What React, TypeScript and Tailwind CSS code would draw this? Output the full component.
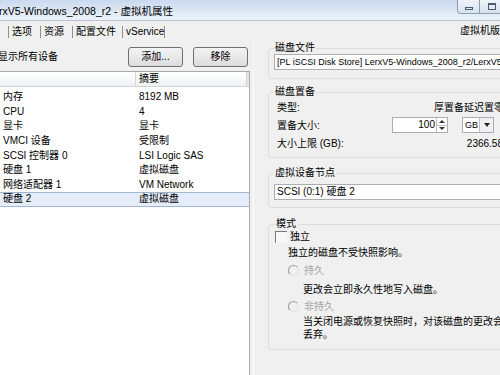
import React from 'react';

const devices = [
  { name: '内存', summary: '8192 MB' },
  { name: 'CPU', summary: '4' },
  { name: '显卡', summary: '显卡' },
  { name: 'VMCI 设备', summary: '受限制' },
  { name: 'SCSI 控制器 0', summary: 'LSI Logic SAS' },
  { name: '硬盘 1', summary: '虚拟磁盘' },
  { name: '网络适配器 1', summary: 'VM Network' },
  { name: '硬盘 2', summary: '虚拟磁盘', selected: true },
];

const tabs = [
  { label: '选项', w: 'w-[32px]' },
  { label: '资源', w: 'w-[32px]' },
  { label: '配置文件', w: 'w-[50px]' },
  { label: 'vService', w: 'w-[43px]' },
];

const Radio = () => (
  <span className="w-[11px] h-[11px] rounded-full border border-t-[#9a9a9a] border-l-[#9a9a9a] border-r-[#e2e2e2] border-b-[#e2e2e2] shrink-0" />
);

const App: React.FC = () => {
  return (
    <div className="w-[500px] h-[375px] overflow-hidden bg-[#f0f0f0] text-[10px] text-black font-['Liberation_Sans','Noto_Sans_CJK_SC',sans-serif] flex flex-col">
      {/* title bar */}
      <div className="h-[21px] shrink-0 flex items-start justify-between border-b border-[#b4c2d3] bg-gradient-to-b from-[#c9d9ee] to-[#edf3fa]">
        <div className="ml-[-1px] mt-[5px] leading-[12px] text-[10.5px] whitespace-nowrap">rxV5-Windows_2008_r2 - 虚拟机属性</div>
        <div className="flex mr-[-5px]">
          <div className="w-[23px] h-[14px] border border-[#8a9bb2] border-t-0 rounded-bl-[4px] bg-gradient-to-b from-[#eef3f9] to-[#d6e1ee] flex items-center justify-center">
            <span className="w-[8px] h-[3px] border border-[#4a5a70] mt-[3px]" />
          </div>
          <div className="w-[25px] h-[14px] border border-l-0 border-[#8a9bb2] border-t-0 bg-gradient-to-b from-[#eef3f9] to-[#d6e1ee] flex items-center justify-center">
            <span className="w-[8px] h-[7px] border border-[#4a5a70] border-t-2" />
          </div>
        </div>
      </div>

      {/* tab strip */}
      <div className="h-[19px] shrink-0 flex items-end justify-between pb-[2px]">
        <div className="flex pl-[8px]">
          {tabs.map((t, i) => (
            <div
              key={t.label}
              className={`${t.w} h-[12px] leading-[12px] pl-[3px] border-l border-[#8c8f94] whitespace-nowrap ${i === tabs.length - 1 ? 'border-r' : ''}`}
            >
              {t.label}
            </div>
          ))}
        </div>
        <div className="mr-[-40px] w-[80px] mb-[1px] leading-[12px] whitespace-nowrap">虚拟机版本: 8</div>
      </div>

      <div className="flex-1 flex min-h-0">
        {/* left pane */}
        <div className="w-[250px] shrink-0 flex flex-col">
          <div className="h-[31px] shrink-0 flex items-center justify-between pt-[2px] pr-[2px]">
            <span className="ml-[-2px] leading-[12px] whitespace-nowrap">显示所有设备</span>
            <div className="flex gap-[10px]">
              <button className="w-[55px] h-[20px] border border-[#707070] rounded-[3px] bg-gradient-to-b from-[#f4f4f4] to-[#dcdcdc] leading-[12px]">添加...</button>
              <button className="w-[55px] h-[20px] border border-[#707070] rounded-[3px] bg-gradient-to-b from-[#f4f4f4] to-[#dcdcdc] leading-[12px]">移除</button>
            </div>
          </div>
          <div className="flex-1 bg-white border-t border-r border-[#a9a9a9] flex flex-col">
            <div className="h-[15px] shrink-0 flex border-b border-[#d5d5d5] bg-gradient-to-b from-white to-[#eef0f3]">
              <div className="w-[136px] border-r border-[#d5d5d5]" />
              <div className="w-[111px] pl-[3px] leading-[14px] border-r border-[#d5d5d5]">摘要</div>
              <div className="flex-1 bg-[#e4e4e4]" />
            </div>
            <div className="pt-[3px] flex flex-col">
              {devices.map((d) => (
                <div
                  key={d.name}
                  className={`h-[14.6px] flex items-center whitespace-nowrap ${d.selected ? 'bg-[#e4edf9] border-y border-[#9fb5d2]' : ''}`}
                >
                  <span className="w-[139px] pl-[3px] leading-[12px]">{d.name}</span>
                  <span className="leading-[12px]">{d.summary}</span>
                </div>
              ))}
            </div>
          </div>
        </div>

        {/* right pane */}
        <div className="ml-[3px] w-[290px] shrink-0 border-l border-[#fafafa] pl-[14px] pt-[2px] flex flex-col">
          <fieldset className="w-[262px] border border-[#d5dfe5] rounded-[3px] px-[5px] pb-[8px]">
            <legend className="px-[1px] leading-[12px]">磁盘文件</legend>
            <div className="h-[16px] border border-[#abadb3] bg-white pl-[2px] leading-[14px] whitespace-nowrap overflow-hidden text-[9px]">
              [PL iSCSI Disk Store] LerxV5-Windows_2008_r2/LerxV5-Windows_2008_r2_1.vmdk
            </div>
          </fieldset>

          <fieldset className="mt-[7px] w-[262px] border border-[#d5dfe5] rounded-[3px] px-[5px] pb-[7px]">
            <legend className="px-[1px] leading-[12px]">磁盘置备</legend>
            <div className="w-[229px] flex flex-col">
              <div className="mt-[2px] h-[14px] flex items-center justify-between whitespace-nowrap">
                <span className="pl-[3px]">类型:</span>
                <span className="mr-[-1px]">厚置备延迟置零</span>
              </div>
              <div className="mt-[3px] h-[16px] flex items-center whitespace-nowrap">
                <span className="w-[118px] pl-[3px]">置备大小:</span>
                <div className="w-[56px] h-[16px] border border-[#abadb3] bg-white flex">
                  <span className="flex-1 text-right pr-[1px] leading-[14px]">100</span>
                  <div className="w-[11px] border-l border-[#c0c0c0] flex flex-col">
                    <div className="flex-1 flex items-center justify-center border-b border-[#c0c0c0]">
                      <span className="w-0 h-0 border-x-[3px] border-x-transparent border-b-[3px] border-b-[#333]" />
                    </div>
                    <div className="flex-1 flex items-center justify-center">
                      <span className="w-0 h-0 border-x-[3px] border-x-transparent border-t-[3px] border-t-[#333]" />
                    </div>
                  </div>
                </div>
                <div className="ml-[14px] w-[32px] h-[16px] border border-[#abadb3] bg-white flex">
                  <span className="flex-1 pl-[2px] leading-[14px] text-[9px]">GB</span>
                  <div className="w-[14px] border-l border-[#c0c0c0] bg-[#f0f0f0] flex items-center justify-center">
                    <span className="w-0 h-0 border-x-[3px] border-x-transparent border-t-[4px] border-t-[#222]" />
                  </div>
                </div>
              </div>
              <div className="mt-[3px] h-[14px] flex items-center justify-between whitespace-nowrap">
                <span className="pl-[3px]">大小上限 (GB):</span>
                <span>2366.58</span>
              </div>
            </div>
          </fieldset>

          <fieldset className="mt-[9px] w-[262px] border border-[#d5dfe5] rounded-[3px] px-[5px] pb-[7px]">
            <legend className="px-[1px] leading-[12px]">虚拟设备节点</legend>
            <div className="mt-[5px] h-[16px] border border-[#abadb3] bg-white pl-[2px] leading-[14px] whitespace-nowrap">
              SCSI (0:1) 硬盘 2
            </div>
          </fieldset>

          <fieldset className="mt-[10px] w-[262px] border border-[#d5dfe5] rounded-[3px] px-[5px] pb-[8px]">
            <legend className="px-[2px] leading-[12px]">模式</legend>
            <div className="h-[13px] flex items-center whitespace-nowrap">
              <span className="ml-[1px] w-[12px] h-[12px] border-t border-l border-t-[#7a7a7a] border-l-[#7a7a7a] bg-[#f7f7f7]" />
              <span className="ml-[3px]">独立</span>
            </div>
            <div className="mt-[2px] h-[14px] pl-[14px] flex items-center whitespace-nowrap">独立的磁盘不受快照影响。</div>
            <div className="mt-[4px] h-[14px] pl-[14px] flex items-center gap-[5px] whitespace-nowrap text-[#a3a3a3]">
              <Radio />
              <span>持久</span>
            </div>
            <div className="mt-[5px] h-[14px] pl-[29px] flex items-center whitespace-nowrap">更改会立即永久性地写入磁盘。</div>
            <div className="mt-[3px] h-[14px] pl-[14px] flex items-center gap-[5px] whitespace-nowrap text-[#a3a3a3]">
              <Radio />
              <span>非持久</span>
            </div>
            <div className="mt-[2px] pl-[29px] leading-[13px]">
              <div className="whitespace-nowrap">当关闭电源或恢复快照时，对该磁盘的更改会将</div>
              <div>丢弃。</div>
            </div>
          </fieldset>
        </div>
      </div>
    </div>
  );
};

export default App;
